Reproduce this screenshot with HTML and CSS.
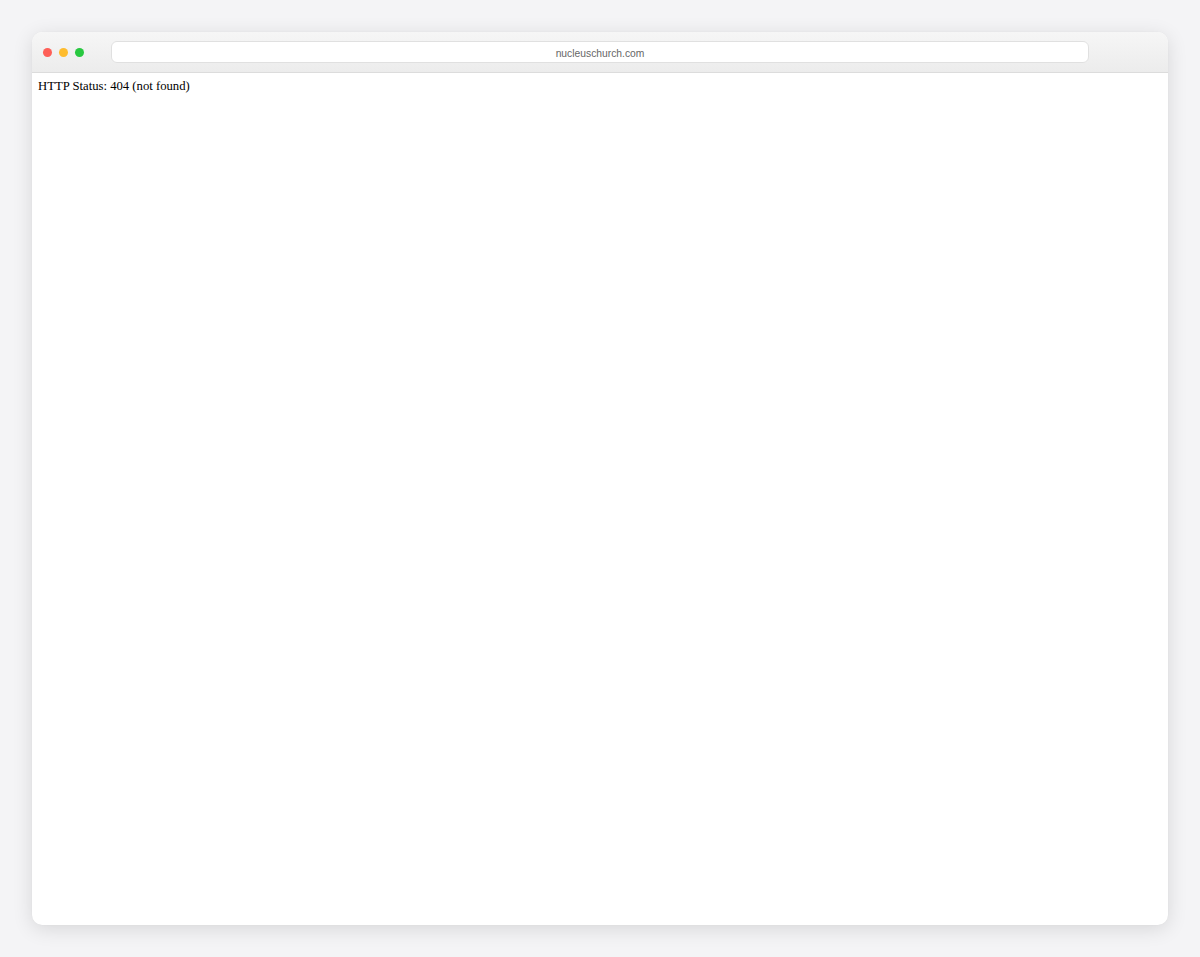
FILE: index.html
```html
<!DOCTYPE html>
<html>
<head>
<meta charset="utf-8">
<link rel="stylesheet" href="styles.css">
</head>
<body>
<div class="window">
  <div class="titlebar">
    <div class="lights">
      <span class="dot red"></span>
      <span class="dot yellow"></span>
      <span class="dot green"></span>
    </div>
    <div class="address">nucleuschurch.com</div>
  </div>
  <div class="content">HTTP Status: 404 (not found)</div>
</div>
</body>
</html>
```
FILE: styles.css
```css
html, body {
  margin: 0;
  padding: 0;
  background: #f4f4f6;
  height: 957px;
  overflow: hidden;
}
body {
  padding: 32px;
  box-sizing: border-box;
}
.window {
  width: 1136px;
  height: 893px;
  background: #fff;
  border-radius: 10px;
  box-shadow: 0 4px 20px rgba(0,0,0,0.12), 0 0 1px rgba(0,0,0,0.08);
  overflow: hidden;
  display: flex;
  flex-direction: column;
}
.titlebar {
  height: 40px;
  flex: none;
  background: linear-gradient(#f6f6f6, #ececec);
  border-bottom: 1px solid #dcdcdc;
  display: flex;
  align-items: center;
  padding-left: 11px;
}
.lights {
  display: flex;
  gap: 7px;
  width: 68px;
}
.dot {
  width: 9px;
  height: 9px;
  border-radius: 50%;
  display: block;
}
.red { background: #fe5f57; }
.yellow { background: #febc2e; }
.green { background: #28c840; }
.address {
  width: 978px;
  height: 22px;
  box-sizing: border-box;
  padding-top: 2px;
  background: #fff;
  border: 1px solid #e0e0e0;
  border-radius: 6px;
  font-family: "Liberation Sans", Arial, sans-serif;
  font-size: 10.3px;
  color: #666;
  display: flex;
  align-items: center;
  justify-content: center;
}
.content {
  flex: 1;
  padding: 6px 6px;
  font-family: "Liberation Serif", "Times New Roman", serif;
  font-size: 12.7px;
  color: #000;
}
```
